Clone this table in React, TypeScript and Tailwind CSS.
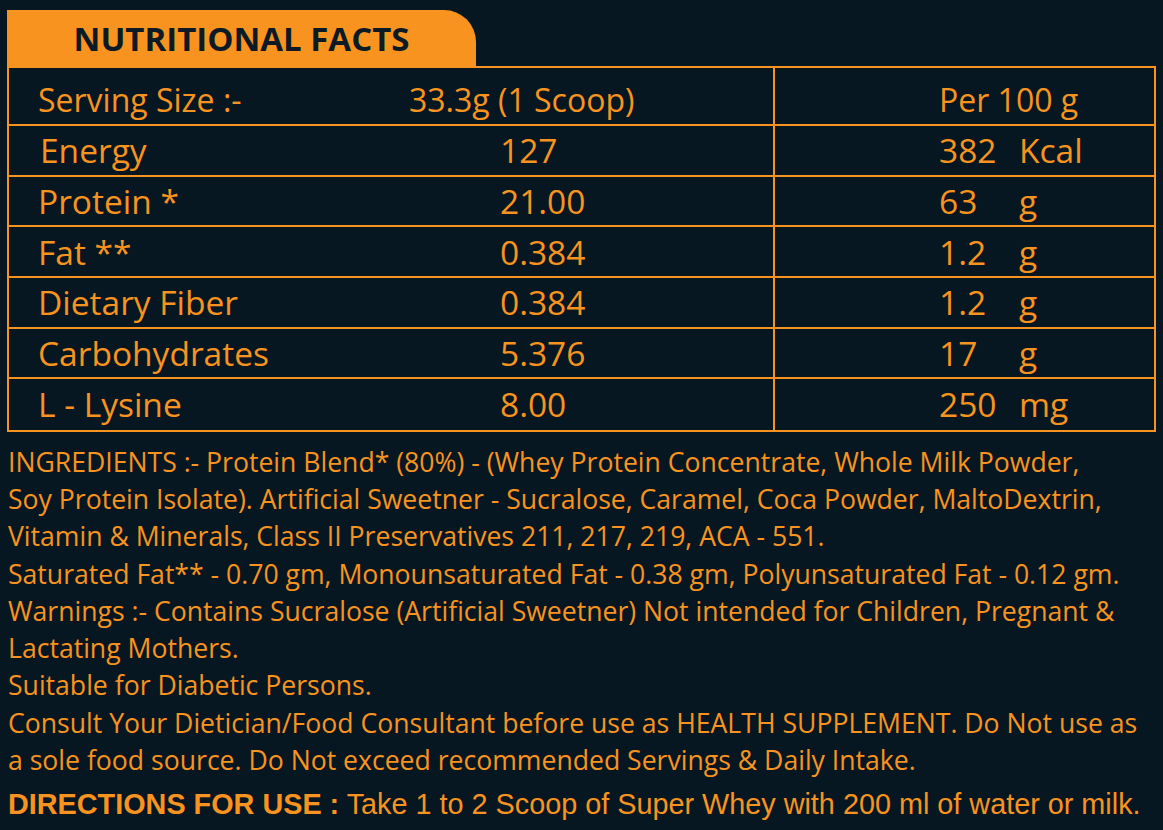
const rows = [
  { label: 'Energy', value: '127', per: '382', unit: 'Kcal' },
  { label: 'Protein *', value: '21.00', per: '63', unit: 'g' },
  { label: 'Fat **', value: '0.384', per: '1.2', unit: 'g' },
  { label: 'Dietary Fiber', value: '0.384', per: '1.2', unit: 'g' },
  { label: 'Carbohydrates', value: '5.376', per: '17', unit: 'g' },
  { label: 'L - Lysine', value: '8.00', per: '250', unit: 'mg' },
];

const notes = [
  'INGREDIENTS :- Protein Blend* (80%) - (Whey Protein Concentrate, Whole Milk Powder,',
  'Soy Protein Isolate). Artificial Sweetner - Sucralose, Caramel, Coca Powder, MaltoDextrin,',
  'Vitamin & Minerals, Class II Preservatives 211, 217, 219, ACA - 551.',
  'Saturated Fat** - 0.70 gm, Monounsaturated Fat - 0.38 gm, Polyunsaturated Fat - 0.12 gm.',
  'Warnings :- Contains Sucralose (Artificial Sweetner) Not intended for Children, Pregnant &',
  'Lactating Mothers.',
  'Suitable for Diabetic Persons.',
  'Consult Your Dietician/Food Consultant before use as HEALTH SUPPLEMENT. Do Not use as',
  'a sole food source. Do Not exceed recommended Servings & Daily Intake.',
];

export default function App() {
  return (
    <div className="w-[1163px] h-[830px] overflow-hidden bg-[#071722] text-[#f7931e] font-['Open_Sans',sans-serif] pt-[10px]">
      {/* Tab header */}
      <div className="ml-[7px] w-[469px] h-[56px] bg-[#f7931e] rounded-tr-[32px] flex items-center justify-center">
        <h1 className="text-[33px] font-bold text-[#0c1a25] leading-none">NUTRITIONAL FACTS</h1>
      </div>

      {/* Table */}
      <div className="ml-[7px] w-[1149px] border-2 border-[#f7931e]">
        <div className="flex h-[58px] border-b-2 border-[#f7931e] text-[32px]">
          <div className="w-[766px] border-r-2 border-[#f7931e] flex items-center pl-[29px] pt-[7px]">
            <span className="w-[371px]">Serving Size :-</span>
            <span>33.3g (1 Scoop)</span>
          </div>
          <div className="flex-1 flex items-center pl-[164px] pt-[7px]">Per 100 g</div>
        </div>
        {rows.map((r, i) => (
          <div
            key={r.label}
            className={`flex h-[50.67px] text-[33.5px] ${i < rows.length - 1 ? 'border-b-2 border-[#f7931e]' : ''}`}
          >
            <div className="w-[766px] border-r-2 border-[#f7931e] flex items-center pl-[29px]">
              <span className={`w-[462px] ${i === 0 ? 'pl-[2px]' : ''}`}>{r.label}</span>
              <span>{r.value}</span>
            </div>
            <div className="flex-1 flex items-center pl-[164px]">
              <span className="w-[80px]">{r.per}</span>
              <span>{r.unit}</span>
            </div>
          </div>
        ))}
      </div>

      {/* Notes */}
      <div className="mt-[12px] pl-[8px] text-[26.6px] leading-[37.25px] whitespace-nowrap">
        {notes.map((n) => (
          <div key={n}>{n}</div>
        ))}
      </div>

      <div className="mt-[7px] pl-[8px] text-[28.8px] leading-[36px] whitespace-nowrap font-['Liberation_Sans',Arial,sans-serif]">
        <span className="font-bold">DIRECTIONS FOR USE :</span> Take 1 to 2 Scoop of Super Whey with 200 ml of water or milk.
      </div>
    </div>
  );
}
